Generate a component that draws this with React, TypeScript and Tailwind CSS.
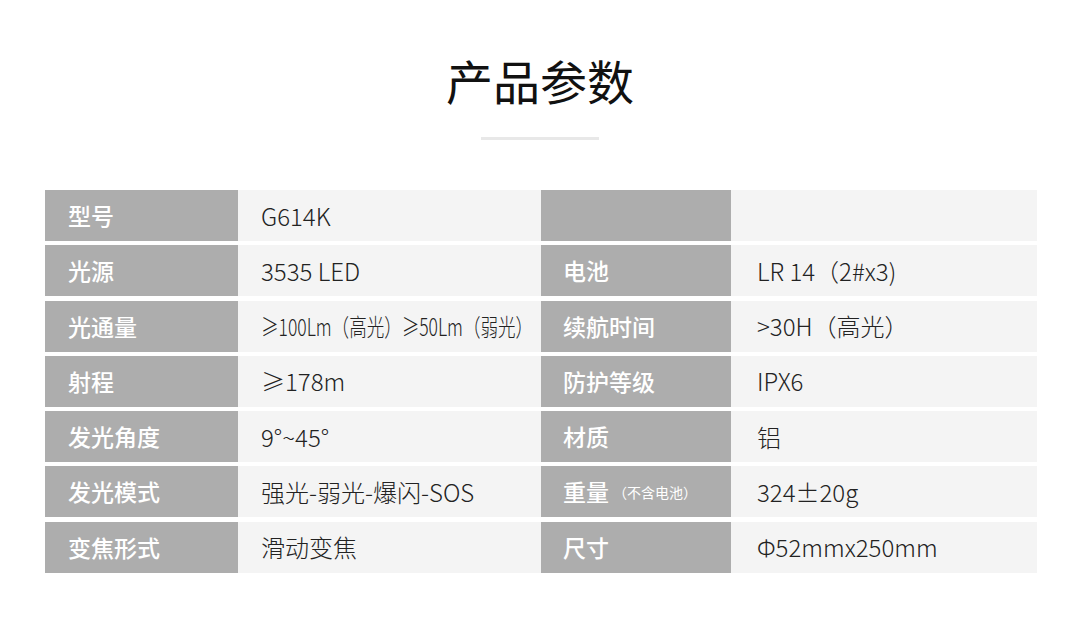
const font = { fontFamily: '"Noto Sans CJK SC", "Noto Sans", sans-serif' };

type Row = {
  l1: string;
  v1: React.ReactNode;
  l2: React.ReactNode;
  v2: string;
};

const rows: Row[] = [
  { l1: '型号', v1: 'G614K', l2: '', v2: '' },
  { l1: '光源', v1: '3535 LED', l2: '电池', v2: 'LR 14（2#x3)' },
  {
    l1: '光通量',
    v1: (
      <span className="inline-block origin-left scale-x-[0.73] whitespace-nowrap">
        ≥100Lm（高光）≥50Lm（弱光）
      </span>
    ),
    l2: '续航时间',
    v2: '>30H（高光）',
  },
  { l1: '射程', v1: '≥178m', l2: '防护等级', v2: 'IPX6' },
  { l1: '发光角度', v1: '9°~45°', l2: '材质', v2: '铝' },
  {
    l1: '发光模式',
    v1: '强光-弱光-爆闪-SOS',
    l2: (
      <>
        重量<span className="ml-1 text-[14px] font-normal">（不含电池）</span>
      </>
    ),
    v2: '324±20g',
  },
  { l1: '变焦形式', v1: '滑动变焦', l2: '尺寸', v2: 'Φ52mmx250mm' },
];

export default function App() {
  return (
    <div className="w-[1080px] h-[620px] bg-white" style={font}>
      <div className="flex flex-col items-center pt-[56px]">
        <h1 className="text-[47px] leading-[47px] text-[#111] font-normal">产品参数</h1>
        <div className="mt-[34px] w-[118px] h-[3px] bg-[#e8e8e8]" />
      </div>

      <div className="mt-[50px] mx-[45px] w-[992px] flex flex-col gap-[4.3px]">
        {rows.map((r, i) => (
          <div key={i} className="flex h-[51px] leading-none">
            <div className="w-[193px] bg-[#adadad] text-white text-[23px] font-medium flex items-center pl-[23px]">
              {r.l1}
            </div>
            <div className="w-[303px] bg-[#f4f4f4] text-[#222] text-[24px] font-light flex items-center pl-[23px]">
              {r.v1}
            </div>
            <div className="w-[190px] bg-[#adadad] text-white text-[23px] font-medium flex items-center pl-[22px]">
              {r.l2}
            </div>
            <div className="flex-1 bg-[#f4f4f4] text-[#222] text-[24px] font-light flex items-center pl-[26px]">
              {r.v2}
            </div>
          </div>
        ))}
      </div>
    </div>
  );
}
